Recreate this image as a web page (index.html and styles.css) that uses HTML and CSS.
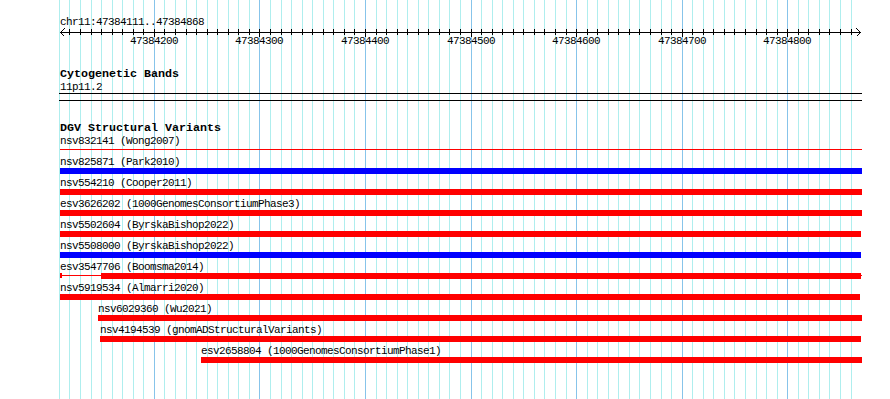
FILE: index.html
```html
<!DOCTYPE html>
<html>
<head>
  <meta charset="UTF-8">
  <title>chr11:47384111..47384868</title>
  <link rel="stylesheet" href="styles.css">
</head>
<body>
  <div class="panel" id="panel">
    <div class="grid" id="grid"></div>

    <div class="ruler">
      <div class="locus">chr11:47384111..47384868</div>
      <svg class="scale" id="scale" width="890" height="9"></svg>
      <div class="ticks" id="ticks"></div>
    </div>

    <section class="track">
      <h2 class="track-title">Cytogenetic Bands</h2>
      <div class="band-label">11p11.2</div>
      <div class="band"></div>
    </section>

    <section class="track">
      <h2 class="track-title">DGV Structural Variants</h2>
      <div class="sv">
        <div class="sv-name" style="margin-left:60px">nsv832141 (Wong2007)</div>
        <div class="sv-bar thin-only" style="margin-left:60px;width:802px"></div>
      </div>
      <div class="sv">
        <div class="sv-name" style="margin-left:60px">nsv825871 (Park2010)</div>
        <div class="sv-bar loss" style="margin-left:60px;width:802px"></div>
      </div>
      <div class="sv">
        <div class="sv-name" style="margin-left:60px">nsv554210 (Cooper2011)</div>
        <div class="sv-bar gain" style="margin-left:60px;width:802px"></div>
      </div>
      <div class="sv">
        <div class="sv-name" style="margin-left:60px">esv3626202 (1000GenomesConsortiumPhase3)</div>
        <div class="sv-bar gain" style="margin-left:60px;width:802px"></div>
      </div>
      <div class="sv">
        <div class="sv-name" style="margin-left:60px">nsv5502604 (ByrskaBishop2022)</div>
        <div class="sv-bar gain" style="margin-left:60px;width:801px"></div>
      </div>
      <div class="sv">
        <div class="sv-name" style="margin-left:60px">nsv5508000 (ByrskaBishop2022)</div>
        <div class="sv-bar loss" style="margin-left:60px;width:801px"></div>
      </div>
      <div class="sv">
        <div class="sv-name" style="margin-left:60px">esv3547706 (Boomsma2014)</div>
        <div class="sv-bar split" style="margin-left:60px;width:802px">
          <span class="cap"></span>
          <span class="thin" style="width:39px"></span>
          <span class="thick" style="width:760px"></span>
          <span class="thin" style="width:1px"></span>
        </div>
      </div>
      <div class="sv">
        <div class="sv-name" style="margin-left:60px">nsv5919534 (Almarri2020)</div>
        <div class="sv-bar gain" style="margin-left:60px;width:800px"></div>
      </div>
      <div class="sv">
        <div class="sv-name" style="margin-left:98px">nsv6029360 (Wu2021)</div>
        <div class="sv-bar gain" style="margin-left:98px;width:764px"></div>
      </div>
      <div class="sv">
        <div class="sv-name" style="margin-left:100px">nsv4194539 (gnomADStructuralVariants)</div>
        <div class="sv-bar gain" style="margin-left:100px;width:761px"></div>
      </div>
      <div class="sv">
        <div class="sv-name" style="margin-left:201px">esv2658804 (1000GenomesConsortiumPhase1)</div>
        <div class="sv-bar gain" style="margin-left:201px;width:661px"></div>
      </div>
    </section>
  </div>

<script type="text/javascript">
var START=47384111, END=47384868,
  X0=60, WIDTH=800, // track starts at x=60, 800px wide
  NS="http://www.w3.org/2000/svg"

function px(pos) {
  return Math.round(X0+(pos-START)*WIDTH/(END-START+1))
}

var grid=document.getElementById("grid"),
  scale=document.getElementById("scale"),
  ticks=document.getElementById("ticks")

function svgLine(x1, y1, x2, y2) {
  var l=document.createElementNS(NS, "line")
  l.setAttribute("x1", x1); l.setAttribute("y1", y1)
  l.setAttribute("x2", x2); l.setAttribute("y2", y2)
  scale.appendChild(l)
}

//+ ruler body and arrow heads
svgLine(60, 4.5, 861, 4.5)
svgLine(60.5, 4.5, 64.5, 0.5); svgLine(60.5, 4.5, 64.5, 8.5)
svgLine(860.5, 4.5, 856.5, 0.5); svgLine(860.5, 4.5, 856.5, 8.5)

//+ grid lines, ticks and tick labels every 10bp
for (var p=47384110; p<=47384860; p+=10) {
  var x=px(p), major=p%100==0
  var g=document.createElement("div")
  g.className=major ? "gl major" : "gl"
  g.style.left=x+"px"
  grid.appendChild(g)
  if (p<START || p>END) continue
  svgLine(x+0.5, 1, x+0.5, major ? 9 : 7)
  if (major) {
    var label=document.createElement("span")
    label.className="tick-label"
    label.textContent=p
    label.style.left=(x-24)+"px"
    ticks.appendChild(label)
  }
}
</script>
</body>
</html>
```

FILE: styles.css
```css
html, body {margin: 0; height: 100%; overflow: hidden;}
body {background: #fff; color: #000; font: 11px/12px "Liberation Mono", "DejaVu Sans Mono", monospace; letter-spacing: -0.6px;}

.panel {position: relative; height: 399px; padding-top: 16px; box-sizing: border-box;}
.grid {position: absolute; top: 0; left: 0; right: 0; bottom: 0; z-index: 0;}
.grid .gl {position: absolute; top: 0; bottom: 0; width: 1px; background: #afeeee;}
.grid .gl.major {background: #87c4ea;}

.ruler, .track {position: relative; z-index: 1;}
.locus {margin-left: 60px; height: 12px; white-space: nowrap;}
.scale {display: block; overflow: visible; shape-rendering: crispEdges;}
.scale line {stroke: #000; stroke-width: 1;}
.ticks {position: relative; height: 12px; margin-top: -2px;}
.tick-label {position: absolute; top: 0; white-space: nowrap;}

.track {margin-top: 21px;}
.track-title {margin: 0 0 0 60px; height: 13px; font: bold 11.67px/13px "Liberation Mono", "DejaVu Sans Mono", monospace; letter-spacing: 0; white-space: nowrap;}
.band-label {margin-left: 60px; height: 12px;}
.band {margin-left: 59px; width: 803px; height: 6px; border-top: 1px solid #000; border-bottom: 1px solid #000;}

.sv {height: 21px;}
.sv-name {height: 12px; white-space: nowrap;}
.sv-bar {height: 6px; display: flex;}
.sv-bar.gain {background: #f00;}
.sv-bar.loss {background: #00f;}
.sv-bar.thin-only {background: linear-gradient(#f00, #f00) 0 2px / 100% 1px no-repeat;}
.sv-bar.split .cap {width: 2px; height: 5px; background: #f00;}
.sv-bar.split .thin {height: 1px; margin-top: 2px; background: #f00;}
.sv-bar.split .thick {background: #f00;}
```
